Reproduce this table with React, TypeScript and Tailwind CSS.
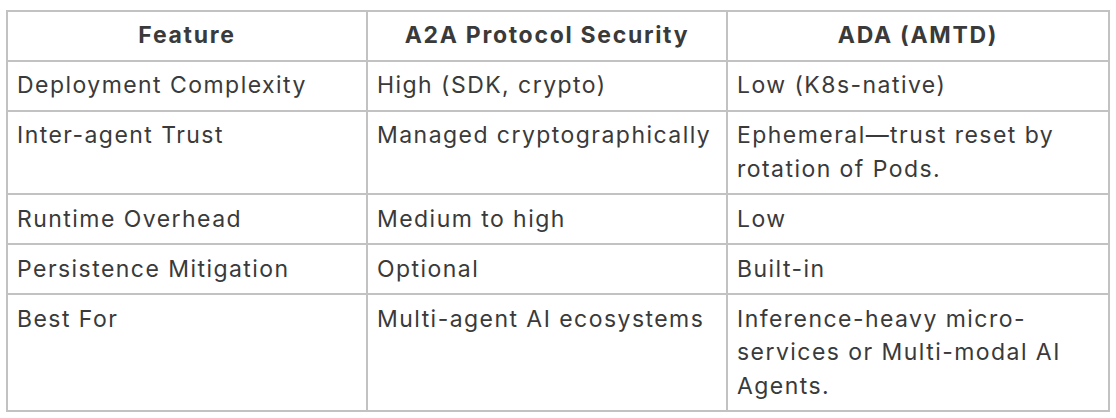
import React from "react";

const rows: [string, string, string][] = [
  ["Deployment Complexity", "High (SDK, crypto)", "Low (K8s-native)"],
  ["Inter-agent Trust", "Managed cryptographically", "Ephemeral—trust reset by rotation of Pods."],
  ["Runtime Overhead", "Medium to high", "Low"],
  ["Persistence Mitigation", "Optional", "Built-in"],
  ["Best For", "Multi-agent AI ecosystems", "Inference-heavy micro-services or Multi-modal AI Agents."],
];

export default function App() {
  return (
    <div className="w-[1116px] h-[418px] bg-white pl-[6px] pt-[10px] font-['Inter','Noto_Sans',sans-serif] text-[#3a3a3a]">
      <table className="border-collapse table-fixed w-[1102px] text-[23px] leading-[33.4px] tracking-[1.45px]">
        <colgroup>
          <col className="w-[360px]" />
          <col className="w-[360px]" />
          <col className="w-[382px]" />
        </colgroup>
        <thead>
          <tr>
            <th className="border-2 border-[#c2c2c2] font-bold text-center py-[7.3px] px-[9px] tracking-[1.7px] text-[#3a3a3a]">Feature</th>
            <th className="border-2 border-[#c2c2c2] font-bold text-center py-[7.3px] px-[9px] tracking-[1.7px] text-[#3a3a3a]">A2A Protocol Security</th>
            <th className="border-2 border-[#c2c2c2] font-bold text-center py-[7.3px] px-[9px] tracking-[1.7px] text-[#3a3a3a]">ADA (AMTD)</th>
          </tr>
        </thead>
        <tbody>
          {rows.map((r, i) => (
            <tr key={i}>
              {r.map((c, j) => (
                <td key={j} className="border-2 border-[#c2c2c2] align-top py-[7.3px] px-[9px] font-normal">
                  {c}
                </td>
              ))}
            </tr>
          ))}
        </tbody>
      </table>
    </div>
  );
}
